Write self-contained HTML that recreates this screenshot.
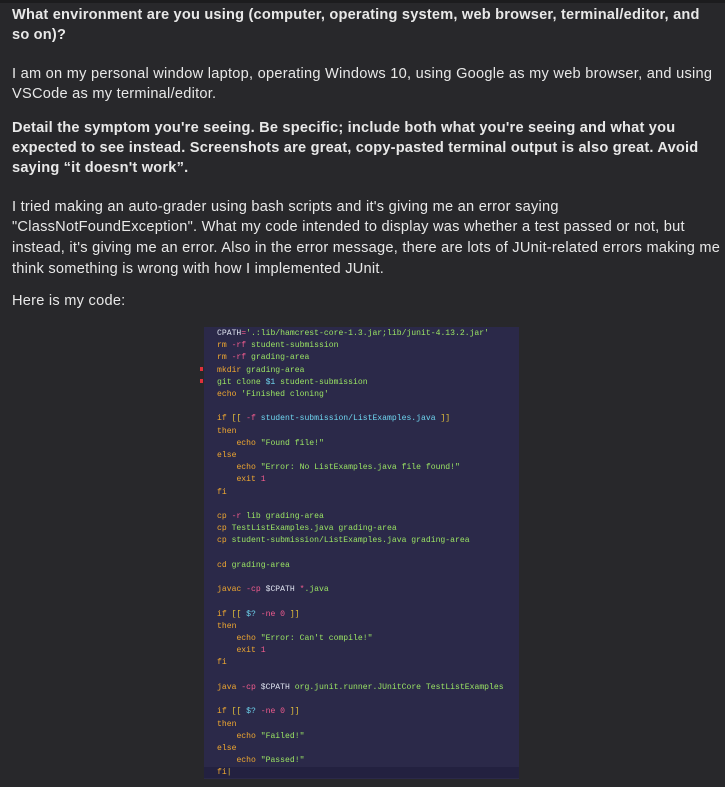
<!DOCTYPE html>
<html><head><meta charset="utf-8"><style>
html,body{margin:0;padding:0;}
body{width:725px;height:787px;background:#28282b;overflow:hidden;position:relative;font-family:"Liberation Sans",sans-serif;color:#e8e8e8;}
.top{position:absolute;left:0;top:0;width:725px;height:3px;background:#1c1c1e;}
.l{position:absolute;left:12px;white-space:nowrap;font-size:14.6px;letter-spacing:0.25px;}
.b{font-weight:bold;letter-spacing:0.2px;}
.code{position:absolute;left:204px;top:327px;width:315px;height:452px;background:#2b2949;}
.code pre{margin:0;position:absolute;left:13px;top:1px;font-family:"Liberation Mono",monospace;font-size:8.1px;line-height:12.2px;color:#9be564;}
.k{color:#f0a830}.f{color:#f25c8e}.c{color:#6fd6f0}.w{color:#dfe3f0}.y{color:#e7c23a}
.cur{position:absolute;left:0;top:440px;width:315px;height:11px;background:#232140;}
.mk{position:absolute;left:-4px;width:3px;height:4px;background:#e0303a;}
</style></head><body>
<div class="top"></div>
<div class="l b" style="top:7px">What environment are you using (computer, operating system, web browser, terminal/editor, and</div>
<div class="l b" style="top:27px">so on)?</div>
<div class="l" style="top:66px">I am on my personal window laptop, operating Windows 10, using Google as my web browser, and using</div>
<div class="l" style="top:86px">VSCode as my terminal/editor.</div>
<div class="l b" style="top:120px">Detail the symptom you're seeing. Be specific; include both what you're seeing and what you</div>
<div class="l b" style="top:140px">expected to see instead. Screenshots are great, copy-pasted terminal output is also great. Avoid</div>
<div class="l b" style="top:160px">saying “it doesn't work”.</div>
<div class="l" style="top:199px">I tried making an auto-grader using bash scripts and it's giving me an error saying</div>
<div class="l" style="top:219px">"ClassNotFoundException". What my code intended to display was whether a test passed or not, but</div>
<div class="l" style="top:240px">instead, it's giving me an error. Also in the error message, there are lots of JUnit-related errors making me</div>
<div class="l" style="top:261px">think something is wrong with how I implemented JUnit.</div>
<div class="l" style="top:293px">Here is my code:</div>
<div class="code">
<div class="cur"></div>
<div class="mk" style="top:40px"></div><div class="mk" style="top:52px"></div>
<pre><span class="w">CPATH</span><span class="f">=</span>'.:lib/hamcrest-core-1.3.jar;lib/junit-4.13.2.jar'
<span class="k">rm</span> <span class="f">-rf</span> student-submission
<span class="k">rm</span> <span class="f">-rf</span> grading-area
<span class="k">mkdir</span> grading-area
git clone <span class="c">$1</span> student-submission
<span class="k">echo</span> 'Finished cloning'

<span class="k">if</span> <span class="y">[[</span> <span class="f">-f</span> <span class="c">student-submission/ListExamples.java</span> <span class="y">]]</span>
<span class="k">then</span>
    <span class="k">echo</span> "Found file!"
<span class="k">else</span>
    <span class="k">echo</span> "Error: No ListExamples.java file found!"
    <span class="k">exit</span> <span class="f">1</span>
<span class="k">fi</span>

<span class="k">cp</span> <span class="f">-r</span> lib grading-area
<span class="k">cp</span> TestListExamples.java grading-area
<span class="k">cp</span> student-submission/ListExamples.java grading-area

<span class="k">cd</span> grading-area

<span class="k">javac</span> <span class="f">-cp</span> <span class="w">$CPATH</span> <span class="f">*</span>.java

<span class="k">if</span> <span class="y">[[</span> <span class="c">$?</span> <span class="f">-ne</span> <span class="f">0</span> <span class="y">]]</span>
<span class="k">then</span>
    <span class="k">echo</span> "Error: Can't compile!"
    <span class="k">exit</span> <span class="f">1</span>
<span class="k">fi</span>

<span class="k">java</span> <span class="f">-cp</span> <span class="w">$CPATH</span> org.junit.runner.JUnitCore TestListExamples

<span class="k">if</span> <span class="y">[[</span> <span class="c">$?</span> <span class="f">-ne</span> <span class="f">0</span> <span class="y">]]</span>
<span class="k">then</span>
    <span class="k">echo</span> "Failed!"
<span class="k">else</span>
    <span class="k">echo</span> "Passed!"
<span class="k">fi</span><span class="y">|</span></pre>
</div>
</body></html>
